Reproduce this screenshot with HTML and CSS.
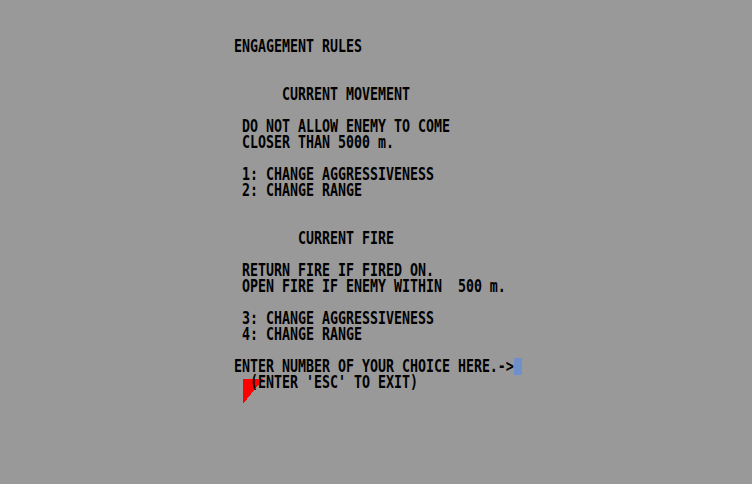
FILE: index.html
```html
<!DOCTYPE html>
<html>
<head>
<meta charset="utf-8">
<link rel="stylesheet" href="styles.css">
</head>
<body>
<div class="screen">
  <div class="line"><span class="t">ENGAGEMENT RULES</span></div>
  <div class="line"></div>
  <div class="line"></div>
  <div class="line"><span class="t">      CURRENT MOVEMENT</span></div>
  <div class="line"></div>
  <div class="line"><span class="t"> DO NOT ALLOW ENEMY TO COME</span></div>
  <div class="line"><span class="t"> CLOSER THAN 5000 m.</span></div>
  <div class="line"></div>
  <div class="line"><span class="t"> 1: CHANGE AGGRESSIVENESS</span></div>
  <div class="line"><span class="t"> 2: CHANGE RANGE</span></div>
  <div class="line"></div>
  <div class="line"></div>
  <div class="line"><span class="t">        CURRENT FIRE</span></div>
  <div class="line"></div>
  <div class="line"><span class="t"> RETURN FIRE IF FIRED ON.</span></div>
  <div class="line"><span class="t"> OPEN FIRE IF ENEMY WITHIN  500 m.</span></div>
  <div class="line"></div>
  <div class="line"><span class="t"> 3: CHANGE AGGRESSIVENESS</span></div>
  <div class="line"><span class="t"> 4: CHANGE RANGE</span></div>
  <div class="line"></div>
  <div class="line"><span class="t">ENTER NUMBER OF YOUR CHOICE HERE.-&gt;</span><span class="cursor"></span></div>
  <div class="line"><span class="t">  (ENTER 'ESC' TO EXIT)</span></div>
</div>
<svg class="pointer" width="21" height="25" viewBox="0 0 21 25" shape-rendering="crispEdges">
  <polygon points="0,0 20,0 0,25" fill="#ff0000"/>
</svg>
</body>
</html>
```

FILE: styles.css
```css
html, body {
  margin: 0;
  padding: 0;
  background: #999999;
  width: 752px;
  height: 484px;
  overflow: hidden;
}

.screen {
  position: relative;
  z-index: 2;
  padding: 39px 0 0 234px;
  font-family: "DejaVu Sans Mono", "Liberation Mono", monospace;
  font-weight: bold;
  font-size: 13.29px;
  color: #000000;
}

.line {
  height: 16px;
  line-height: 16px;
  white-space: pre;
  display: flex;
  align-items: center;
}

.t {
  display: inline-block;
  transform: scaleY(1.26);
  transform-origin: 50% 50%;
  line-height: 16px;
}

.cursor {
  display: inline-block;
  width: 8px;
  height: 17px;
  margin-top: -2px;
  background: #7090cc;
}

.pointer {
  position: absolute;
  left: 243px;
  top: 379px;
  z-index: 1;
}
```
